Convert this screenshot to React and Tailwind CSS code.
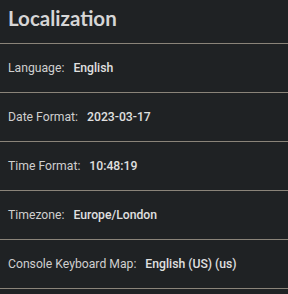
export default function App() {
  const rows = [
    ["Language:", "English"],
    ["Date Format:", "2023-03-17"],
    ["Time Format:", "10:48:19"],
    ["Timezone:", "Europe/London"],
    ["Console Keyboard Map:", "English (US) (us)"],
  ];
  return (
    <div className="w-[288px] h-[294px] bg-[#1f2224] overflow-hidden">
      <div className="h-[43px] pl-2 pt-[4px] text-[20.5px] font-bold text-[#d6d6d6] leading-[28px]" style={{ fontFamily: 'Lato, sans-serif' }}>
        Localization
      </div>
      {rows.map(([l, v]) => (
        <div key={l} className="h-[49px] border-t border-[#8a8479] flex items-center pl-2 text-[12.2px] text-[#cfcfcf]" style={{ fontFamily: 'Roboto, sans-serif' }}>
          <span>{l}</span>
          <span className="ml-[9px] font-medium text-[#e0e0e0]">{v}</span>
        </div>
      ))}
      <div className="border-t border-[#8a8479]" />
    </div>
  );
}
